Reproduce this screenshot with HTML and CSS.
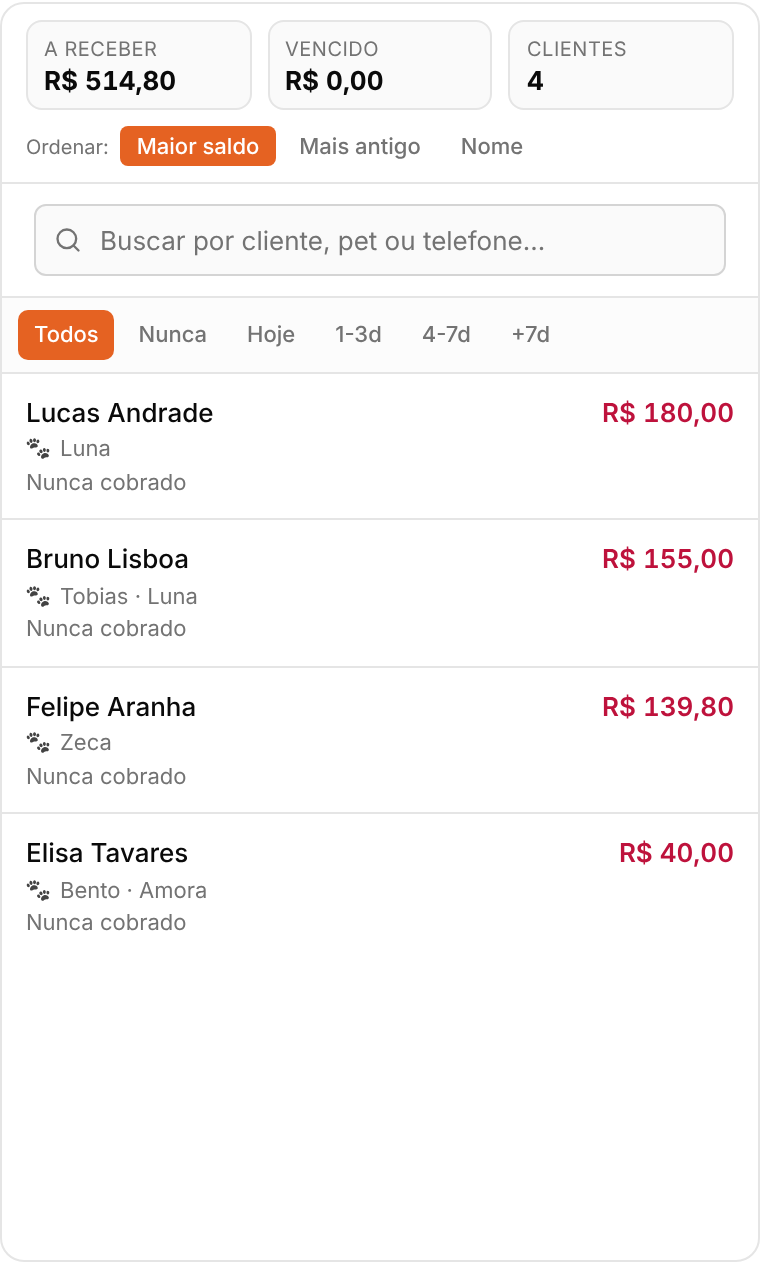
FILE: index.html
```html
<!DOCTYPE html>
<html lang="pt-BR">
<head>
<meta charset="utf-8">
<title>Cobranças</title>
<link rel="stylesheet" href="styles.css">
</head>
<body>
<main class="card">
  <section class="summary">
    <div class="stats">
      <div class="stat"><div class="stat-label">A RECEBER</div><div class="stat-value">R$ 514,80</div></div>
      <div class="stat"><div class="stat-label">VENCIDO</div><div class="stat-value">R$ 0,00</div></div>
      <div class="stat"><div class="stat-label">CLIENTES</div><div class="stat-value">4</div></div>
    </div>
    <div class="sort">
      <span class="sort-label">Ordenar:</span>
      <span class="sort-btn active">Maior saldo</span>
      <span class="sort-btn">Mais antigo</span>
      <span class="sort-btn">Nome</span>
    </div>
  </section>
  <section class="search-wrap">
    <div class="search">
      <svg class="search-icon" viewBox="0 0 24 24" fill="none" stroke="currentColor" stroke-width="2" stroke-linecap="round" stroke-linejoin="round"><circle cx="11" cy="11" r="8"/><path d="m21 21-4.3-4.3"/></svg>
      <span class="placeholder">Buscar por cliente, pet ou telefone...</span>
    </div>
  </section>
  <nav class="tabs">
    <span class="tab active">Todos</span>
    <span class="tab">Nunca</span>
    <span class="tab">Hoje</span>
    <span class="tab">1-3d</span>
    <span class="tab">4-7d</span>
    <span class="tab">+7d</span>
  </nav>
  <ul class="rows">
    <li class="row">
      <div class="row-main"><div class="name">Lucas Andrade</div><div class="pets"><span class="paw">🐾</span>Luna</div><div class="status">Nunca cobrado</div></div>
      <div class="amount">R$ 180,00</div>
    </li>
    <li class="row multi">
      <div class="row-main"><div class="name">Bruno Lisboa</div><div class="pets"><span class="paw">🐾</span>Tobias · Luna</div><div class="status">Nunca cobrado</div></div>
      <div class="amount">R$ 155,00</div>
    </li>
    <li class="row">
      <div class="row-main"><div class="name">Felipe Aranha</div><div class="pets"><span class="paw">🐾</span>Zeca</div><div class="status">Nunca cobrado</div></div>
      <div class="amount">R$ 139,80</div>
    </li>
    <li class="row multi">
      <div class="row-main"><div class="name">Elisa Tavares</div><div class="pets"><span class="paw">🐾</span>Bento · Amora</div><div class="status">Nunca cobrado</div></div>
      <div class="amount">R$ 40,00</div>
    </li>
  </ul>
</main>
</body>
</html>
```
FILE: styles.css
```css
* { box-sizing: border-box; }
html, body { margin: 0; padding: 0; background: #fff; }
body { font-family: Inter, "Liberation Sans", sans-serif; color: #0a0a0a; text-rendering: geometricPrecision; }
.card {
  margin-top: 2px;
  height: 1260px;
  border: 2px solid #e5e5e5;
  border-radius: 24px;
  background: #fff;
  overflow: hidden;
  transform: translateZ(0);
}
.summary { padding: 16px 24px 16px; border-bottom: 2px solid #e5e5e5; }
.stats { display: grid; grid-template-columns: 226px 224px 226px; gap: 16px; }
.stat {
  height: 90px;
  padding: 15px 16px;
  background: #fafafa;
  border: 2px solid #e5e5e5;
  border-radius: 16px;
}
.stat:nth-child(2) { padding-left: 15px; }
.stat:nth-child(3) { padding-left: 17px; }
.stat-label { font-size: 20px; line-height: 24px; color: #737373; letter-spacing: 0.5px; }
.stat-value { font-size: 26px; line-height: 32px; margin-top: 5px; font-weight: 700; color: #0a0a0a; font-variant-numeric: tabular-nums; }
.sort { display: flex; align-items: center; margin-top: 16px; }
.sort-label { font-size: 20px; color: #737373; margin-right: 11px; padding-top: 2px; }
.sort-btn {
  font-size: 22px; line-height: 42px; height: 40px; font-weight: 500;
  padding: 0 17px; margin-right: 6px; color: #737373; border-radius: 8px;
}
.sort-btn.active { background: #e56222; color: #fff; }
.search-wrap { padding: 20px 32px; border-bottom: 2px solid #e5e5e5; }
.search {
  display: flex; align-items: center; gap: 18px;
  height: 72px; padding: 0 18px;
  background: #fafafa;
  border: 2px solid #d4d4d4;
  border-radius: 12px;
  color: #737373;
}
.search-icon { width: 28px; height: 28px; flex: none; }
.placeholder { font-size: 26px; padding-top: 2px; }
.tabs {
  display: flex; gap: 8px; align-items: center;
  height: 76px; padding: 0 16px;
  background: #fcfcfc;
  border-bottom: 2px solid #e5e5e5;
}
.tab { font-size: 22px; font-weight: 500; line-height: 50px; height: 50px; padding: 0 16px; color: #737373; border-radius: 10px; white-space: nowrap; }
.tab.active { background: #e56222; color: #fff; width: 96px; margin-right: 0.6px; }
.rows { list-style: none; margin: 0; padding: 0; }
.row {
  display: flex; justify-content: space-between; align-items: flex-start;
  padding: 24px 24px 19px;
  border-bottom: 2px solid #e5e5e5;
}
.row.multi { padding-bottom: 21px; }
.row:last-child { border-bottom: 0; }
.name { font-size: 26px; line-height: 32px; font-weight: 500; color: #0a0a0a; }
.pets { height: 34px; font-size: 22px; line-height: 34px; color: #737373; margin-top: 2px; }
.multi .pets { position: relative; top: 2px; }
.paw { display: inline-block; width: 35px; margin-left: -1px; font-size: 21px; line-height: 1; transform: translateY(-1px); filter: grayscale(1) brightness(0.7); }
.status { font-size: 22px; line-height: 32px; color: #737373; margin-top: 1px; }
.amount { font-size: 26px; line-height: 32px; font-weight: 600; color: #be123c; font-variant-numeric: tabular-nums; }
```
